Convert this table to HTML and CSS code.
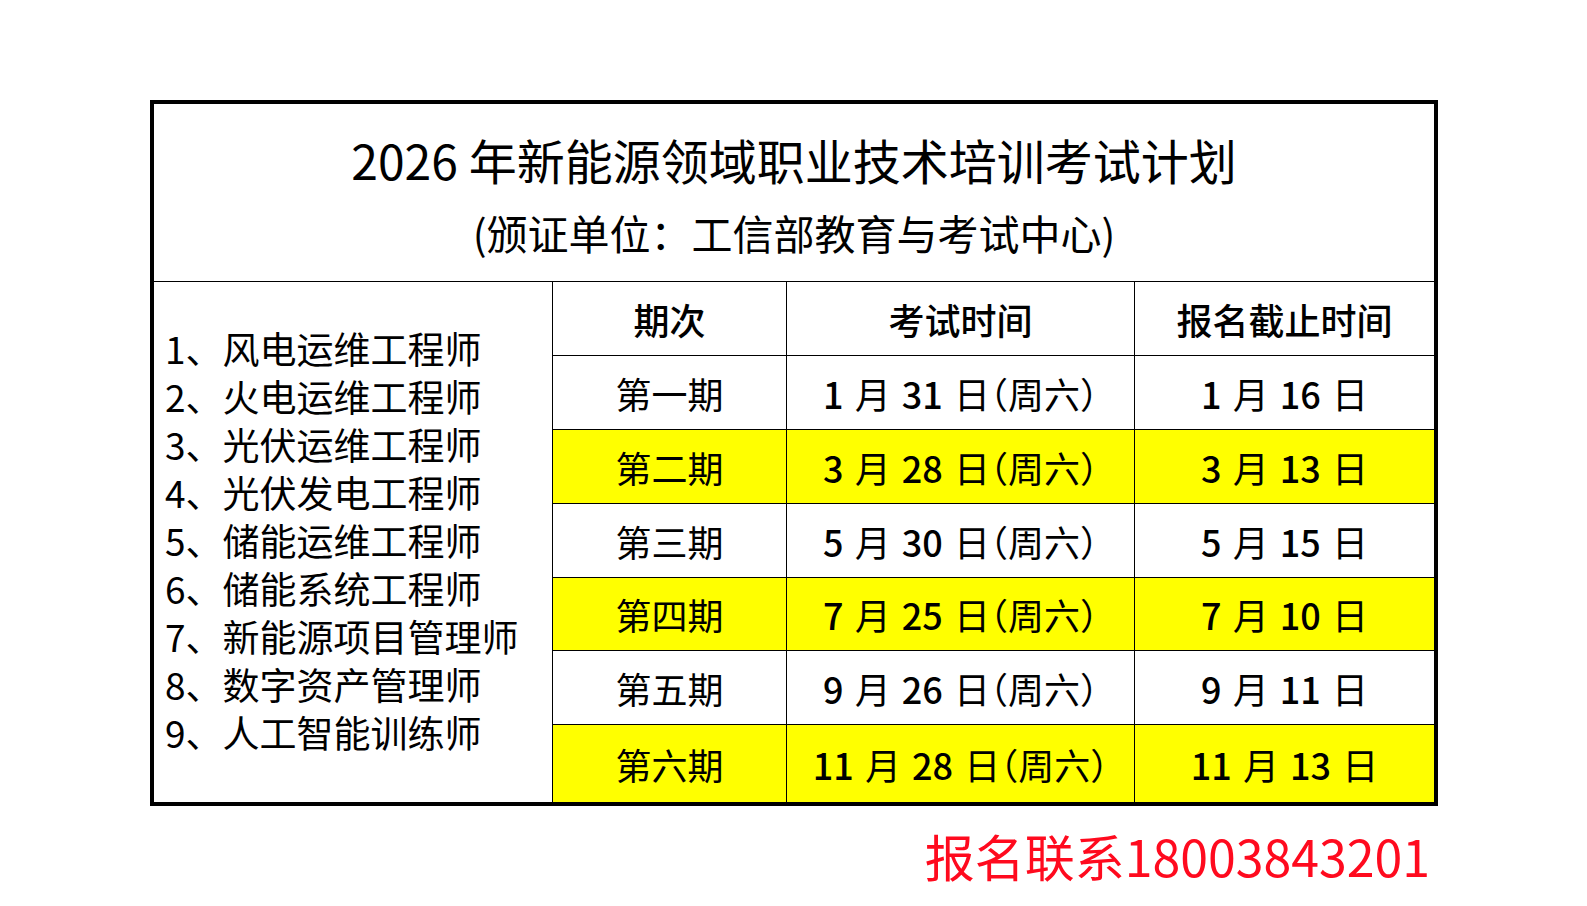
FILE: index.html
```html
<!DOCTYPE html>
<html lang="zh-CN">
<head>
<meta charset="utf-8">
<title>2026年新能源领域职业技术培训考试计划</title>
<link rel="stylesheet" href="styles.css">
</head>
<body>
<div class="page">
  <div class="sheet">
    <div class="head">
      <div class="title">2026 年新能源领域职业技术培训考试计划</div>
      <div class="subtitle">(颁证单位：工信部教育与考试中心)</div>
    </div>
    <div class="grid">
      <div class="list">
        <div class="item"><span class="idx">1、</span>风电运维工程师</div>
        <div class="item"><span class="idx">2、</span>火电运维工程师</div>
        <div class="item"><span class="idx">3、</span>光伏运维工程师</div>
        <div class="item"><span class="idx">4、</span>光伏发电工程师</div>
        <div class="item"><span class="idx">5、</span>储能运维工程师</div>
        <div class="item"><span class="idx">6、</span>储能系统工程师</div>
        <div class="item"><span class="idx">7、</span>新能源项目管理师</div>
        <div class="item"><span class="idx">8、</span>数字资产管理师</div>
        <div class="item"><span class="idx">9、</span>人工智能训练师</div>
      </div>

      <div class="cell th">期次</div>
      <div class="cell th">考试时间</div>
      <div class="cell th">报名截止时间</div>

      <div class="cell">第一期</div>
      <div class="cell date"><span class="num">1</span> 月 <span class="num">31</span> 日（周六）</div>
      <div class="cell date"><span class="num">1</span> 月 <span class="num">16</span> 日</div>

      <div class="cell hl">第二期</div>
      <div class="cell date hl"><span class="num">3</span> 月 <span class="num">28</span> 日（周六）</div>
      <div class="cell date hl"><span class="num">3</span> 月 <span class="num">13</span> 日</div>

      <div class="cell">第三期</div>
      <div class="cell date"><span class="num">5</span> 月 <span class="num">30</span> 日（周六）</div>
      <div class="cell date"><span class="num">5</span> 月 <span class="num">15</span> 日</div>

      <div class="cell hl">第四期</div>
      <div class="cell date hl"><span class="num">7</span> 月 <span class="num">25</span> 日（周六）</div>
      <div class="cell date hl"><span class="num">7</span> 月 <span class="num">10</span> 日</div>

      <div class="cell">第五期</div>
      <div class="cell date"><span class="num">9</span> 月 <span class="num">26</span> 日（周六）</div>
      <div class="cell date"><span class="num">9</span> 月 <span class="num">11</span> 日</div>

      <div class="cell hl">第六期</div>
      <div class="cell date hl"><span class="num">11</span> 月 <span class="num">28</span> 日（周六）</div>
      <div class="cell date hl"><span class="num">11</span> 月 <span class="num">13</span> 日</div>
    </div>
  </div>
  <div class="contact">报名联系18003843201</div>
</div>
</body>
</html>
```

FILE: styles.css
```css
html, body {
  margin: 0;
  padding: 0;
  background: #ffffff;
}

body {
  font-family: "Noto Sans CJK SC", "Noto Sans", sans-serif;
  color: #000000;
}

.page {
  padding: 100px 0 0 150px;
  width: 1288px;
}

.sheet {
  box-sizing: border-box;
  width: 1288px;
  height: 706px;
  border: 4px solid #000000;
  display: flex;
  flex-direction: column;
}

.head {
  height: 178px;
  border-bottom: 1px solid #000000;
  display: flex;
  flex-direction: column;
  align-items: center;
  padding-top: 25px;
  box-sizing: border-box;
}

.title {
  font-size: 48px;
  line-height: 60px;
  font-weight: 400;
}

.subtitle {
  margin-top: 18px;
  font-size: 41px;
  line-height: 50px;
  font-weight: 400;
}

.grid {
  flex: 1;
  display: grid;
  grid-template-columns: 398px 233px 347px 299px;
  grid-template-rows: 73px 73px 73px 73px 72px 73px 1fr;
  gap: 1px;
  background: #000000;
}

.list {
  grid-row: 1 / 8;
  grid-column: 1;
  background: #ffffff;
  display: flex;
  flex-direction: column;
  justify-content: center;
  padding-left: 11px;
  padding-bottom: 4px;
}

.item {
  font-size: 37px;
  line-height: 48px;
  white-space: nowrap;
}

.idx {
  font-weight: 400;
}

.cell {
  background: #ffffff;
  display: flex;
  align-items: center;
  justify-content: center;
  font-size: 36px;
  white-space: pre;
  font-feature-settings: "halt";
}

.cell.date {
  word-spacing: 3px;
}

.cell.th {
  font-weight: 500;
}

.cell.hl {
  background: #ffff00;
}

.num {
  font-weight: 500;
}

.contact {
  margin-top: 19px;
  text-align: right;
  padding-right: 8px;
  font-size: 50px;
  line-height: 60px;
  color: #ff0a1e;
}
```
